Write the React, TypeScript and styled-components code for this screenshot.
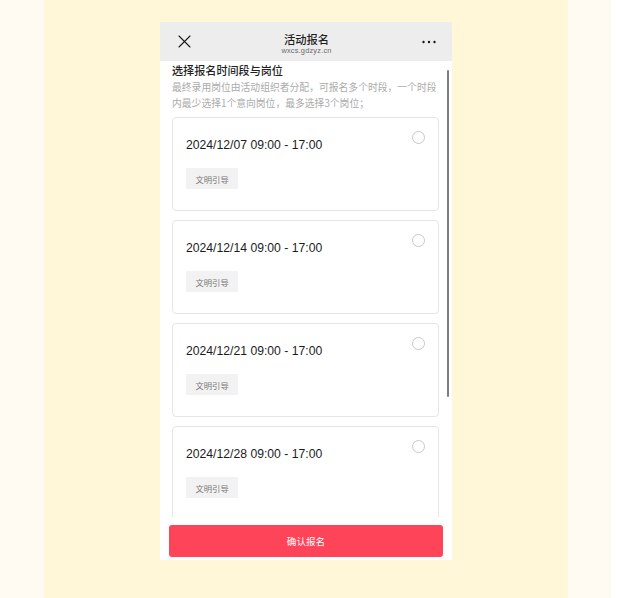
import React from "react";
import styled, { createGlobalStyle } from "styled-components";

const Global = createGlobalStyle`
  html, body { margin: 0; padding: 0; background: #ffffff; }
  body { font-family: "Liberation Sans", "Noto Sans CJK SC", sans-serif; }
  * { box-sizing: border-box; }
`;

const Page = styled.div`
  display: flex;
  height: 598px;
  width: 617px;
  overflow: hidden;
`;

const SideBand = styled.div<{ $w: number }>`
  width: ${(p) => p.$w}px;
  flex: none;
  background: #fffaf2;
`;

const Stage = styled.div`
  width: 524px;
  flex: none;
  background: #fff7d8;
  display: flex;
  flex-direction: column;
  align-items: center;
  padding-top: 22px;
`;

const Phone = styled.div`
  width: 292px;
  height: 538px;
  background: #ffffff;
  display: flex;
  flex-direction: column;
`;

const NavBar = styled.div`
  height: 39px;
  flex: none;
  background: #ededed;
  display: flex;
  align-items: center;
  justify-content: space-between;
  padding: 0 13px 0 14px;
`;

const NavBtn = styled.div`
  width: 20px;
  height: 20px;
  display: flex;
  align-items: center;
  justify-content: center;
  color: #1a1a1a;
`;

const NavTitleBox = styled.div`
  display: flex;
  flex-direction: column;
  align-items: center;
  padding-top: 4px;
`;

const NavTitle = styled.div`
  font-family: "Noto Sans CJK SC", sans-serif;
  font-size: 11.3px;
  font-weight: 500;
  line-height: 14px;
  color: #1f1f1f;
`;

const NavSub = styled.div`
  font-family: "Liberation Sans", sans-serif;
  font-size: 7.4px;
  letter-spacing: 0.2px;
  line-height: 9px;
  color: #6b6b6b;
`;

const Scroll = styled.div`
  position: relative;
  flex: 1;
  overflow: hidden;
  padding: 3px 13px 0 12px;
`;

const ScrollThumb = styled.div`
  position: absolute;
  right: 3px;
  top: 9px;
  width: 2.5px;
  height: 327px;
  border-radius: 2px;
  background: #7d7d7d;
`;

const SectionTitle = styled.div`
  font-family: "Noto Sans CJK SC", sans-serif;
  font-size: 11.1px;
  font-weight: 500;
  line-height: 13px;
  color: #1f1f1f;
`;

const SectionDesc = styled.div`
  font-family: "Noto Sans CJK SC", sans-serif;
  font-size: 9.8px;
  line-height: 16px;
  margin-top: 2px;
  color: #ababab;
`;

const CardList = styled.div`
  display: flex;
  flex-direction: column;
  gap: 9px;
  margin-top: 6px;
`;

const Card = styled.div`
  height: 94px;
  flex: none;
  border: 1px solid #e6e6e6;
  border-radius: 4px;
  padding: 13px 13px 0 13px;
  display: flex;
  justify-content: space-between;
  align-items: flex-start;
`;

const CardBody = styled.div`
  display: flex;
  flex-direction: column;
  align-items: flex-start;
  padding-top: 7px;
`;

const SlotTime = styled.div`
  font-family: "Liberation Sans", sans-serif;
  font-size: 12.2px;
  line-height: 14px;
  color: #1c1c1c;
`;

const Tag = styled.div`
  margin-top: 16px;
  height: 21px;
  padding: 0 9.5px;
  display: flex;
  align-items: center;
  background: #f2f2f2;
  border-radius: 1px;
  font-family: "Noto Sans CJK SC", sans-serif;
  font-size: 8.3px;
  color: #777777;
`;

const Radio = styled.div`
  width: 13px;
  height: 13px;
  flex: none;
  border: 1px solid #c8c8c8;
  border-radius: 50%;
`;

const Footer = styled.div`
  flex: none;
  height: 43px;
  padding: 8px 9px 3px 9px;
`;

const SubmitBtn = styled.button`
  width: 100%;
  height: 32px;
  border: none;
  border-radius: 3px;
  background: #fe4458;
  color: #ffffff;
  font-family: "Noto Sans CJK SC", sans-serif;
  font-size: 9.6px;
  display: flex;
  align-items: center;
  justify-content: center;
  padding: 0;
`;

const slots = [
  "2024/12/07 09:00 - 17:00",
  "2024/12/14 09:00 - 17:00",
  "2024/12/21 09:00 - 17:00",
  "2024/12/28 09:00 - 17:00",
];

export default function App() {
  return (
    <>
      <Global />
      <Page>
        <SideBand $w={44} />
        <Stage>
          <Phone>
            <NavBar>
              <NavBtn>
                <svg width="13" height="13" viewBox="0 0 13 13">
                  <path d="M1 1 L12 12 M12 1 L1 12" stroke="#1a1a1a" strokeWidth="1.1" strokeLinecap="round" />
                </svg>
              </NavBtn>
              <NavTitleBox>
                <NavTitle>活动报名</NavTitle>
                <NavSub>wxcs.gdzyz.cn</NavSub>
              </NavTitleBox>
              <NavBtn>
                <svg width="14" height="4" viewBox="0 0 14 4">
                  <circle cx="1.5" cy="2" r="1.2" fill="#1a1a1a" />
                  <circle cx="7" cy="2" r="1.2" fill="#1a1a1a" />
                  <circle cx="12.5" cy="2" r="1.2" fill="#1a1a1a" />
                </svg>
              </NavBtn>
            </NavBar>
            <Scroll>
              <SectionTitle>选择报名时间段与岗位</SectionTitle>
              <SectionDesc>
                最终录用岗位由活动组织者分配，可报名多个时段，一个时段内最少选择1个意向岗位，最多选择3个岗位；
              </SectionDesc>
              <CardList>
                {slots.map((s) => (
                  <Card key={s}>
                    <CardBody>
                      <SlotTime>{s}</SlotTime>
                      <Tag>文明引导</Tag>
                    </CardBody>
                    <Radio />
                  </Card>
                ))}
              </CardList>
              <ScrollThumb />
            </Scroll>
            <Footer>
              <SubmitBtn>确认报名</SubmitBtn>
            </Footer>
          </Phone>
        </Stage>
        <SideBand $w={43} />
      </Page>
    </>
  );
}
